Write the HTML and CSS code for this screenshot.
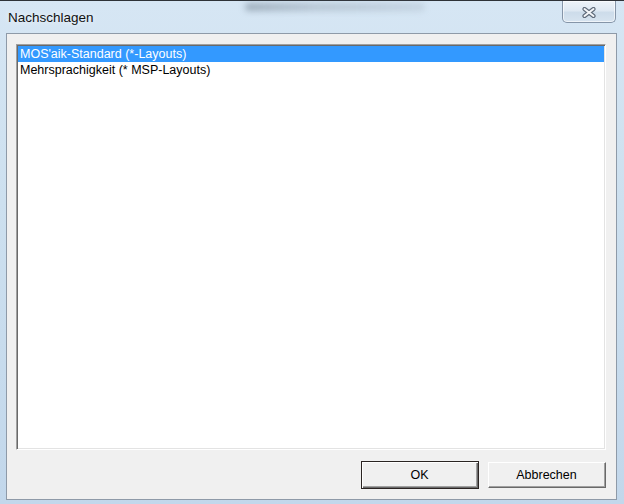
FILE: index.html
```html
<!DOCTYPE html>
<html lang="de">
<head>
<meta charset="utf-8">
<title>Nachschlagen</title>
<link rel="stylesheet" href="styles.css">
</head>
<body>
<div class="window">
  <div class="titlebar">
    <span class="title">Nachschlagen</span>
    <div class="behind" aria-hidden="true"></div>
    <button class="close" aria-label="Schließen">
      <svg width="14" height="11" viewBox="0 0 14 11">
        <path d="M2.5 2 L11.5 9 M11.5 2 L2.5 9" stroke="#5f6b7a" stroke-width="4.2" stroke-linecap="round" fill="none"/>
        <path d="M2.5 2 L11.5 9 M11.5 2 L2.5 9" stroke="#f4f6f9" stroke-width="2" stroke-linecap="round" fill="none"/>
      </svg>
    </button>
  </div>
  <div class="client">
    <ul class="listbox">
      <li class="item selected">MOS'aik-Standard (*-Layouts)</li>
      <li class="item">Mehrsprachigkeit (* MSP-Layouts)</li>
    </ul>
    <div class="buttons">
      <button class="btn default"><span class="btn-inner">OK</span></button>
      <button class="btn"><span class="btn-inner">Abbrechen</span></button>
    </div>
  </div>
</div>
</body>
</html>
```

FILE: styles.css
```css
* { box-sizing: border-box; }

html, body {
  margin: 0;
  padding: 0;
}

body {
  width: 624px;
  height: 504px;
  overflow: hidden;
  font-family: "Liberation Sans", Arial, sans-serif;
}

.window {
  width: 624px;
  height: 504px;
  display: flex;
  flex-direction: column;
  border-top: 1px solid #2e3238;
  background: linear-gradient(to bottom, #d6e6f4 0%, #cde0ef 40%, #c2d7eb 100%);
  position: relative;
}

.titlebar {
  height: 32px;
  display: flex;
  align-items: flex-start;
  padding: 0 8px 0 8px;
  position: relative;
}

.title {
  font-size: 13.5px;
  color: #111;
  line-height: 16px;
  margin-top: 9px;
  text-shadow: 0 0 6px rgba(255, 255, 255, 0.9);
}

.behind {
  position: absolute;
  left: 245px;
  top: 2px;
  width: 180px;
  height: 8px;
  border-radius: 4px;
  background: linear-gradient(to right, rgba(90, 105, 120, 0.45), rgba(110, 125, 140, 0.3) 40%, rgba(130, 145, 160, 0.22) 100%);
  filter: blur(3px);
}

.close {
  margin-left: auto;
  width: 54px;
  height: 22px;
  padding: 0;
  border: 1px solid #8595a8;
  border-top: none;
  border-radius: 0 0 5px 5px;
  background: linear-gradient(to bottom, #edf3f9 0%, #dfe9f3 45%, #cddcea 55%, #d7e4f0 100%);
  box-shadow: inset 0 0 0 1px rgba(255, 255, 255, 0.6);
  display: flex;
  align-items: center;
  justify-content: center;
}

.close svg { display: block; margin-top: 1px; }

.client {
  margin: 0 7px 0 6px;
  height: 467px;
  border: 1px solid #8e9aa8;
  background: #f0f0f0;
  padding: 10px 10px 10px 9px;
  display: flex;
  flex-direction: column;
}

.listbox {
  list-style: none;
  margin: 0;
  padding: 1px;
  height: 406px;
  background: #fff;
  border: 1px solid;
  border-color: #a0a0a0 #ffffff #ffffff #a0a0a0;
  box-shadow: inset 1px 1px 0 #696969, inset -1px -1px 0 #e3e3e3;
}

.item {
  height: 16px;
  line-height: 16px;
  padding-left: 2px;
  font-size: 12.5px;
  color: #000;
  white-space: nowrap;
}

.item.selected {
  background: #3399ff;
  color: #fff;
}

.buttons {
  margin-top: 11px;
  display: flex;
  justify-content: flex-end;
  align-items: center;
  gap: 9px;
}

.btn {
  width: 118px;
  height: 26px;
  padding: 0;
  margin: 0;
  border: 1px solid;
  border-color: #ffffff #696969 #696969 #ffffff;
  background: #f0f0f0;
  font-family: "Liberation Sans", Arial, sans-serif;
  font-size: 12.5px;
  color: #000;
  display: flex;
}

.btn-inner {
  flex: 1;
  display: flex;
  align-items: center;
  justify-content: center;
  border-right: 1px solid #a0a0a0;
  border-bottom: 1px solid #a0a0a0;
}

.btn.default {
  height: 28px;
  border: 1px solid #2a2422;
  box-shadow: inset 1px 1px 0 #ffffff, inset -1px -1px 0 #696969;
  padding: 1px;
}
```
